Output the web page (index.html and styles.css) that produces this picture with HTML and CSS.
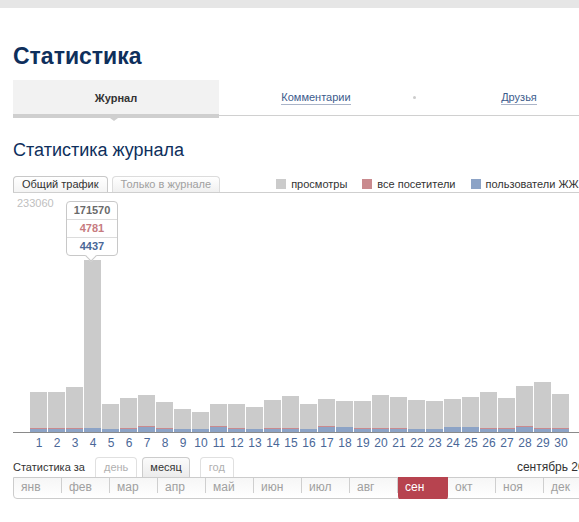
FILE: index.html
```html
<!DOCTYPE html>
<html lang="ru">
<head>
<meta charset="utf-8">
<title>Статистика</title>
<link rel="stylesheet" href="styles.css">
</head>
<body>
<div class="topbar"></div>
<div class="page">
  <h1 class="title">Статистика</h1>
  <div class="tabs">
    <div class="tab tab-active"><span>Журнал</span><i class="tab-arrow"></i></div>
    <div class="tab tab-mid"><a href="#">Комментарии</a></div>
    <div class="tab-dot"></div>
    <div class="tab tab-last"><a href="#">Друзья</a></div>
  </div>

  <h2 class="subtitle">Статистика журнала</h2>

  <div class="chart-head">
    <div class="ctab ctab-active">Общий трафик</div>
    <div class="ctab">Только в журнале</div>
    <div class="legend">
      <span class="lg"><i class="sq sq-gray"></i>просмотры</span>
      <span class="lg"><i class="sq sq-red"></i>все посетители</span>
      <span class="lg"><i class="sq sq-blue"></i>пользователи ЖЖ</span>
    </div>
  </div>

  <div class="chart">
    <div class="max">233060</div>
    <div class="bars">
      <div class="bar" style="height:40px"><i class="v"></i><i class="r" style="height:1px"></i><i class="u" style="height:3px"></i></div>
      <div class="bar" style="height:40px"><i class="v"></i><i class="r" style="height:1px"></i><i class="u" style="height:3px"></i></div>
      <div class="bar" style="height:45px"><i class="v"></i><i class="r" style="height:1px"></i><i class="u" style="height:3px"></i></div>
      <div class="bar" style="height:172px"><i class="v"></i><i class="r" style="height:0px"></i><i class="u" style="height:4px"></i></div>
      <div class="bar" style="height:28px"><i class="v"></i><i class="r" style="height:0px"></i><i class="u" style="height:3px"></i></div>
      <div class="bar" style="height:34px"><i class="v"></i><i class="r" style="height:1px"></i><i class="u" style="height:3px"></i></div>
      <div class="bar" style="height:37px"><i class="v"></i><i class="r" style="height:1px"></i><i class="u" style="height:5px"></i></div>
      <div class="bar" style="height:30px"><i class="v"></i><i class="r" style="height:1px"></i><i class="u" style="height:3px"></i></div>
      <div class="bar" style="height:23px"><i class="v"></i><i class="r" style="height:0px"></i><i class="u" style="height:3px"></i></div>
      <div class="bar" style="height:20px"><i class="v"></i><i class="r" style="height:0px"></i><i class="u" style="height:3px"></i></div>
      <div class="bar" style="height:28px"><i class="v"></i><i class="r" style="height:1px"></i><i class="u" style="height:5px"></i></div>
      <div class="bar" style="height:28px"><i class="v"></i><i class="r" style="height:1px"></i><i class="u" style="height:3px"></i></div>
      <div class="bar" style="height:25px"><i class="v"></i><i class="r" style="height:0px"></i><i class="u" style="height:3px"></i></div>
      <div class="bar" style="height:32px"><i class="v"></i><i class="r" style="height:1px"></i><i class="u" style="height:3px"></i></div>
      <div class="bar" style="height:36px"><i class="v"></i><i class="r" style="height:1px"></i><i class="u" style="height:3px"></i></div>
      <div class="bar" style="height:28px"><i class="v"></i><i class="r" style="height:0px"></i><i class="u" style="height:3px"></i></div>
      <div class="bar" style="height:33px"><i class="v"></i><i class="r" style="height:1px"></i><i class="u" style="height:5px"></i></div>
      <div class="bar" style="height:31px"><i class="v"></i><i class="r" style="height:0px"></i><i class="u" style="height:5px"></i></div>
      <div class="bar" style="height:31px"><i class="v"></i><i class="r" style="height:1px"></i><i class="u" style="height:3px"></i></div>
      <div class="bar" style="height:37px"><i class="v"></i><i class="r" style="height:1px"></i><i class="u" style="height:3px"></i></div>
      <div class="bar" style="height:35px"><i class="v"></i><i class="r" style="height:1px"></i><i class="u" style="height:3px"></i></div>
      <div class="bar" style="height:32px"><i class="v"></i><i class="r" style="height:0px"></i><i class="u" style="height:3px"></i></div>
      <div class="bar" style="height:31px"><i class="v"></i><i class="r" style="height:0px"></i><i class="u" style="height:3px"></i></div>
      <div class="bar" style="height:33px"><i class="v"></i><i class="r" style="height:0px"></i><i class="u" style="height:5px"></i></div>
      <div class="bar" style="height:35px"><i class="v"></i><i class="r" style="height:0px"></i><i class="u" style="height:5px"></i></div>
      <div class="bar" style="height:40px"><i class="v"></i><i class="r" style="height:1px"></i><i class="u" style="height:3px"></i></div>
      <div class="bar" style="height:34px"><i class="v"></i><i class="r" style="height:1px"></i><i class="u" style="height:3px"></i></div>
      <div class="bar" style="height:46px"><i class="v"></i><i class="r" style="height:1px"></i><i class="u" style="height:5px"></i></div>
      <div class="bar" style="height:50px"><i class="v"></i><i class="r" style="height:1px"></i><i class="u" style="height:3px"></i></div>
      <div class="bar" style="height:38px"><i class="v"></i><i class="r" style="height:1px"></i><i class="u" style="height:3px"></i></div>
    </div>
    <div class="tip">
      <div class="tip-row tip-gray">171570</div>
      <div class="tip-row tip-red">4781</div>
      <div class="tip-row tip-blue">4437</div>
      <i class="tip-arrow"></i>
    </div>
  </div>

  <div class="days">
    <span>1</span><span>2</span><span>3</span><span>4</span><span>5</span><span>6</span><span>7</span><span>8</span><span>9</span><span>10</span>
    <span>11</span><span>12</span><span>13</span><span>14</span><span>15</span><span>16</span><span>17</span><span>18</span><span>19</span><span>20</span>
    <span>21</span><span>22</span><span>23</span><span>24</span><span>25</span><span>26</span><span>27</span><span>28</span><span>29</span><span>30</span>
  </div>

  <div class="period">
    <span class="period-label">Статистика за</span>
    <div class="ptab">день</div>
    <div class="ptab ptab-active">месяц</div>
    <div class="ptab ptab-year">год</div>
    <span class="period-date">сентябрь 2014</span>
  </div>
  <div class="months">
    <div class="m">янв</div>
    <div class="m">фев</div>
    <div class="m">мар</div>
    <div class="m">апр</div>
    <div class="m">май</div>
    <div class="m">июн</div>
    <div class="m">июл</div>
    <div class="m">авг</div>
    <div class="m m-active">сен</div>
    <div class="m">окт</div>
    <div class="m">ноя</div>
    <div class="m">дек</div>
  </div>
</div>
</body>
</html>
```

FILE: styles.css
```css
html, body {
  margin: 0;
  padding: 0;
  overflow: hidden;
  background: #fff;
  font-family: "Liberation Sans", Arial, sans-serif;
  color: #333;
}
.topbar {
  height: 8px;
  background: #e6e6e6;
}
.page {
  width: 585px;
  padding-left: 13px;
}
.title {
  margin: 34px 0 0;
  font-size: 23px;
  line-height: 28px;
  font-weight: bold;
  color: #0e2f5c;
}
.tabs {
  margin-top: 10px;
  display: flex;
  height: 35px;
  border-bottom: 1px solid #d0d0d0;
  font-size: 11px;
  width: 640px;
}
.tab {
  display: flex;
  align-items: center;
  justify-content: center;
  height: 35px;
}
.tab-active {
  position: relative;
  width: 206px;
  background: #f2f2f2;
  font-weight: bold;
  color: #333;
  box-sizing: border-box;
  border-bottom: 4px solid #cfcfcf;
  height: 38px;
  padding-top: 1px;
}
.tab-arrow {
  position: absolute;
  left: 97px;
  bottom: -7px;
  width: 0;
  height: 0;
  border-left: 4px solid transparent;
  border-right: 4px solid transparent;
  border-top: 3px solid #cfcfcf;
}
.tab-mid { width: 194px; }
.tab-last { width: 206px; }
.tab a {
  color: #3c5b8c;
  text-decoration: none;
  border-bottom: 1px solid #aab4c8;
  line-height: 13px;
}
.tab-dot {
  width: 3px;
  height: 3px;
  border-radius: 50%;
  background: #ccc;
  align-self: center;
  margin-top: -1px;
}
.subtitle {
  margin: 23px 0 0;
  font-size: 18px;
  line-height: 22px;
  font-weight: normal;
  color: #0e2f5c;
}
.chart-head {
  margin-top: 15px;
  display: flex;
  align-items: flex-end;
  height: 16px;
  border-bottom: 1px solid #cfcfcf;
  font-size: 11px;
  width: 640px;
}
.ctab {
  height: 15px;
  line-height: 15px;
  padding: 0 8px;
  margin-right: 4px;
  border: 1px solid #dcdcdc;
  border-bottom: none;
  border-radius: 4px 4px 0 0;
  background: linear-gradient(#fff, #f0f0f0);
  color: #a0a0a0;
  white-space: nowrap;
}
.ctab-active {
  border-color: #c8c8c8;
  color: #333;
  background: linear-gradient(#fff, #f4f4f4);
}
.legend {
  margin-left: 52px;
  display: flex;
  align-self: center;
  gap: 15px;
  white-space: nowrap;
  color: #333;
  font-size: 11px;
}
.lg {
  display: flex;
  align-items: center;
}
.sq {
  display: inline-block;
  width: 10px;
  height: 10px;
  margin-right: 5px;
}
.sq-gray { background: #cbcbcb; }
.sq-red { background: #c98a8e; }
.sq-blue { background: #8ca3c6; }
.chart {
  position: relative;
  height: 239px;
  border-bottom: 1px solid #8a8a8a;
  display: flex;
  align-items: flex-end;
  width: 640px;
}
.max {
  position: absolute;
  left: 4px;
  top: 4px;
  font-size: 11px;
  color: #c0c0c0;
}
.bars {
  display: flex;
  align-items: flex-end;
  gap: 1px;
  padding-left: 17px;
}
.bar {
  width: 17px;
  display: flex;
  flex-direction: column;
}
.bar i { display: block; }
.bar .v { flex: 1; background: #cbcbcb; }
.bar .r { background: #c98a8e; }
.bar .u { background: #8ca3c6; }
.tip {
  position: absolute;
  left: 53px;
  top: 8px;
  width: 50px;
  border: 1px solid #c8c8c8;
  border-radius: 4px;
  background: #fff;
  font-size: 11px;
  font-weight: bold;
  text-align: center;
}
.tip-row {
  height: 17px;
  line-height: 17px;
  border-top: 1px solid #dcdcdc;
}
.tip-row:first-child { border-top: none; }
.tip-gray { color: #6a6a6a; }
.tip-red { color: #c77b7f; }
.tip-blue { color: #4a6797; }
.tip-arrow {
  position: absolute;
  left: 20px;
  bottom: -5px;
  width: 7px;
  height: 7px;
  background: #fff;
  border-right: 1px solid #c8c8c8;
  border-bottom: 1px solid #c8c8c8;
  transform: rotate(45deg);
}
.days {
  display: flex;
  padding-left: 17px;
  height: 21px;
  line-height: 21px;
  font-size: 12px;
  color: #4a6797;
}
.days span {
  width: 18px;
  text-align: center;
}
.period {
  margin-top: 3px;
  display: flex;
  align-items: flex-end;
  height: 20px;
  font-size: 11px;
}
.period-label {
  align-self: center;
  margin-right: 10px;
  color: #333;
  font-size: 11px;
}
.ptab {
  height: 19px;
  line-height: 19px;
  padding: 0 8px;
  margin-right: 5px;
  border: 1px solid #e0e0e0;
  border-bottom: none;
  border-radius: 4px 4px 0 0;
  color: #b0b0b0;
  background: #fff;
}
.ptab-active {
  border-color: #cccccc;
  color: #333;
  background: linear-gradient(#fbfbfb, #ececec);
  padding: 0 7px;
  margin-right: 10px;
}
.period-date {
  margin-left: auto;
  align-self: center;
  font-size: 12px;
  color: #333;
  white-space: nowrap;
}
.months {
  display: flex;
  height: 20px;
  border: 1px solid #cccccc;
  border-radius: 0 0 4px 4px;
  background: linear-gradient(#f6f6f6, #fff);
  font-size: 12px;
}
.m {
  position: relative;
  width: 48px;
  padding-left: 7px;
  box-sizing: border-box;
  line-height: 19px;
  color: #a0a0a0;
  border-right: 1px solid #cfcfcf;
  height: 15px;
}
.m-active {
  width: 50px;
  height: 23px;
  margin-top: -1px;
  padding-top: 1px;
  border-right: none;
  background: #b7434f;
  color: #fff;
  border-radius: 0 0 4px 4px;
}
```
